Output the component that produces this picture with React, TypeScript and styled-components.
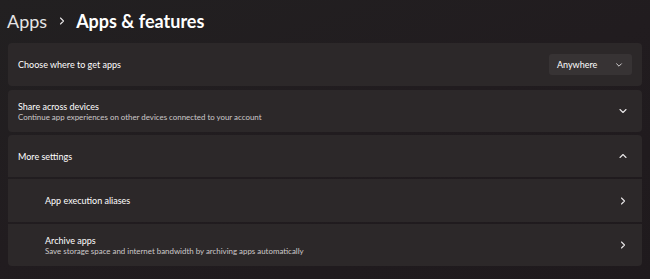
import React from 'react';
import styled, { createGlobalStyle } from 'styled-components';

const GlobalStyle = createGlobalStyle`
  html, body {
    margin: 0;
    padding: 0;
    background: #1f1b1d;
  }
  body {
    font-family: Lato, "Noto Sans", "Liberation Sans", sans-serif;
    color: #ffffff;
  }
`;

const Page = styled.div`
  width: 650px;
  height: 279px;
  box-sizing: border-box;
  padding: 0 8px 0 8px;
  background: linear-gradient(160deg, #222021 0%, #211c1f 50%, #1f1a1d 100%);
  overflow: hidden;
`;

const Breadcrumb = styled.div`
  display: flex;
  align-items: center;
  height: 43px;
  margin-left: -1px;
  font-size: 18px;
  line-height: 1;
  padding-bottom: 2px;
  box-sizing: border-box;
`;

const Crumb = styled.span<{ current?: boolean }>`
  font-weight: ${p => (p.current ? 700 : 400)};
  color: ${p => (p.current ? '#ffffff' : '#e6e4e5')};
`;

const CrumbSep = styled.span`
  display: flex;
  align-items: center;
  margin: 0 9px 0 10px;
  color: #cfcccd;
`;

const List = styled.div`
  display: flex;
  flex-direction: column;
  gap: 4px;
`;

const Card = styled.div`
  background: #2c2829;
  border-radius: 4px;
  overflow: hidden;
`;

const Group = styled.div`
  display: flex;
  flex-direction: column;
  gap: 2px;
  border-radius: 4px;
  overflow: hidden;
  margin-top: -1px;
`;

const Row = styled.div<{ nested?: boolean; h?: number }>`
  display: flex;
  align-items: center;
  justify-content: space-between;
  height: ${p => p.h ?? 43}px;
  box-sizing: border-box;
  padding: 0 14px 0 ${p => (p.nested ? 37 : 10)}px;
  background: #2c2829;
`;

const Texts = styled.div`
  display: flex;
  flex-direction: column;
`;

const Title = styled.div`
  font-size: 9px;
  line-height: 11px;
  color: #ffffff;
`;

const Subtitle = styled.div`
  font-size: 7.9px;
  line-height: 10px;
  color: #cdc9ca;
`;

const Dropdown = styled.div`
  display: flex;
  align-items: center;
  justify-content: space-between;
  width: 83px;
  height: 21px;
  box-sizing: border-box;
  padding: 0 9px 0 8px;
  margin-right: -4px;
  background: #373334;
  border-radius: 3px;
  font-size: 9px;
  color: #ffffff;
`;

const Chevron: React.FC<{ dir: 'down' | 'up' | 'right'; size?: number }> = ({ dir, size = 10 }) => {
  const d =
    dir === 'down' ? 'M2 3.5 L5 6.5 L8 3.5' : dir === 'up' ? 'M2 6.5 L5 3.5 L8 6.5' : 'M3.5 2 L6.5 5 L3.5 8';
  return (
    <svg width={size} height={size} viewBox="0 0 10 10" fill="none">
      <path d={d} stroke="#e8e6e7" strokeWidth={1.1} strokeLinecap="round" strokeLinejoin="round" />
    </svg>
  );
};

const App: React.FC = () => {
  return (
    <>
      <GlobalStyle />
      <Page>
        <Breadcrumb>
          <Crumb>Apps</Crumb>
          <CrumbSep>
            <Chevron dir="right" size={10} />
          </CrumbSep>
          <Crumb current>Apps &amp; features</Crumb>
        </Breadcrumb>
        <List>
          <Card>
            <Row>
              <Title>Choose where to get apps</Title>
              <Dropdown>
                <span>Anywhere</span>
                <Chevron dir="down" size={8} />
              </Dropdown>
            </Row>
          </Card>
          <Card>
            <Row h={42}>
              <Texts>
                <Title>Share across devices</Title>
                <Subtitle>Continue app experiences on other devices connected to your account</Subtitle>
              </Texts>
              <Chevron dir="down" />
            </Row>
          </Card>
          <Group>
            <Row h={42}>
              <Title>More settings</Title>
              <Chevron dir="up" />
            </Row>
            <Row nested h={43}>
              <Title>App execution aliases</Title>
              <Chevron dir="right" />
            </Row>
            <Row nested h={42}>
              <Texts>
                <Title>Archive apps</Title>
                <Subtitle>Save storage space and internet bandwidth by archiving apps automatically</Subtitle>
              </Texts>
              <Chevron dir="right" />
            </Row>
          </Group>
        </List>
      </Page>
    </>
  );
};

export default App;
